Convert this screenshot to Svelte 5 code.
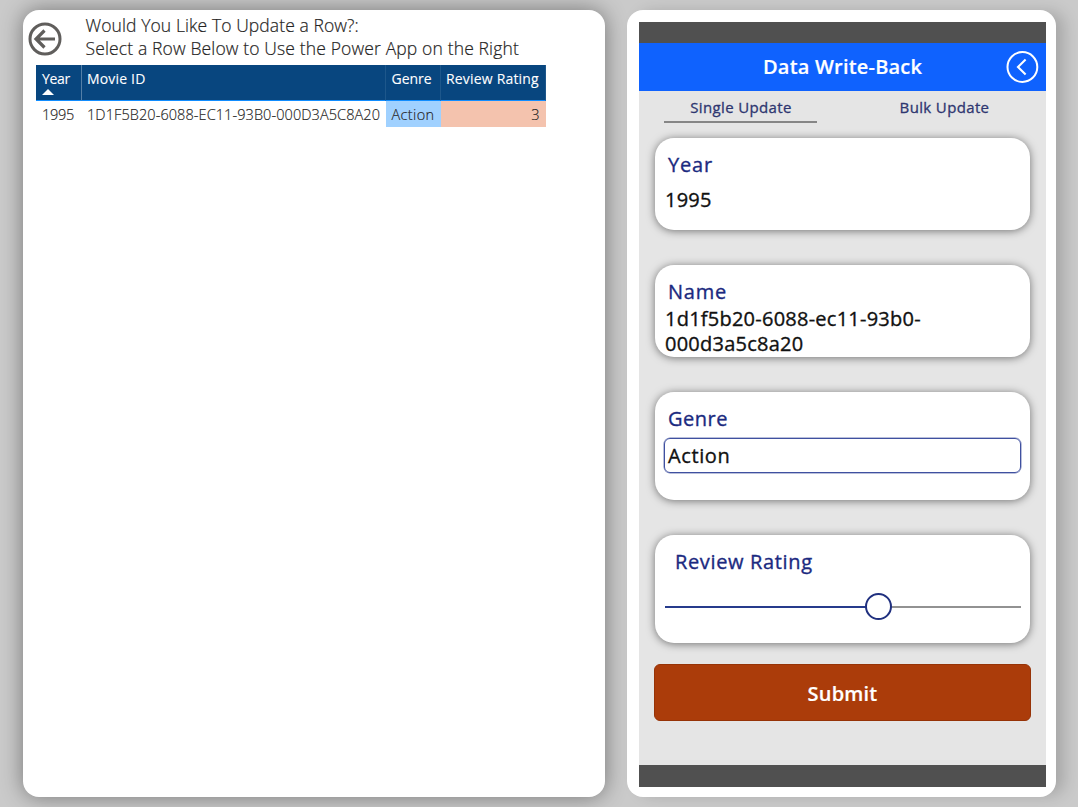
<script>
  const row = { year: '1995', id: '1D1F5B20-6088-EC11-93B0-000D3A5C8A20', genre: 'Action', rating: 3 };
  const sliderPercent = 60;
</script>

<main>
  <section class="panel report">
    <header>
      <svg class="back" width="34" height="34" viewBox="0 0 34 34" fill="none" stroke="#605e5c">
        <circle cx="17" cy="17" r="15" stroke-width="3" />
        <path d="M27 17H8M16.5 8.5L8 17L16.5 25.5" stroke-width="3.2" />
      </svg>
      <div class="title">
        <div class="t1">Would You Like To Update a Row?:</div>
        <div class="t2">Select a Row Below to Use the Power App on the Right</div>
      </div>
    </header>
    <div class="table">
      <div class="cell head year"><span>Year</span><i class="sort"></i></div>
      <div class="cell head movie"><span>Movie ID</span></div>
      <div class="cell head genre"><span>Genre</span></div>
      <div class="cell head rating"><span>Review Rating</span></div>
      <div class="cell year val"><span>{row.year}</span></div>
      <div class="cell movie val"><span>{row.id}</span></div>
      <div class="cell genre val"><span>{row.genre}</span></div>
      <div class="cell rating val"><span>{row.rating}</span></div>
    </div>
  </section>

  <section class="panel device">
    <div class="app">
      <div class="bar"></div>
      <div class="banner">
        <h1>Data Write-Back</h1>
        <svg class="prev" width="34" height="34" viewBox="0 0 34 34" fill="none" stroke="#fff">
          <circle cx="17.4" cy="17" r="14.9" stroke-width="2" />
          <path d="M20.6 9.6L13 17L20.6 24.4" stroke-width="2.1" />
        </svg>
      </div>
      <nav>
        <div class="tab active"><span>Single Update</span></div>
        <div class="tab bulk"><span>Bulk Update</span></div>
      </nav>
      <div class="cards">
        <div class="card">
          <div class="label l-year">Year</div>
          <div class="value year-value">1995</div>
        </div>
        <div class="card">
          <div class="label l-name">Name</div>
          <div class="value name-value">1d1f5b20-6088-ec11-93b0-<br />000d3a5c8a20</div>
        </div>
        <div class="card tall">
          <div class="label l-genre">Genre</div>
          <div class="input value">Action</div>
        </div>
        <div class="card tall">
          <div class="label l-rating">Review Rating</div>
          <div class="slider">
            <div class="fill" style="width: {sliderPercent}%"></div>
            <div class="knob" style="left: {sliderPercent}%"></div>
          </div>
        </div>
      </div>
      <button>Submit</button>
      <div class="bar foot"></div>
    </div>
  </section>
</main>

<style>
  :global(body) { margin: 0; overflow: hidden; }
  main {
    box-sizing: border-box;
    width: 1078px;
    height: 807px;
    padding: 10px 22px 10px 23px;
    display: flex;
    gap: 22px;
    background: #cacaca;
    overflow: hidden;
    font-family: "Open Sans", sans-serif;
  }
  .panel {
    box-sizing: border-box;
    height: 787px;
    border-radius: 16px;
    background: #fff;
  }
  .report { width: 582px; box-shadow: 0 0 22px rgba(0, 0, 0, 0.42); }
  .device { width: 429px; padding: 12px 9px 10px 12px; box-shadow: 10px 0 16px -2px rgba(0, 0, 0, 0.18); }
  header { display: flex; height: 55px; padding-left: 5px; }
  .back { margin-top: 12px; }
  .title {
    margin: 4px 0 0 23.5px;
    font-size: 17.5px;
    line-height: 23px;
    font-weight: 300;
    color: #252423;
    white-space: nowrap;
    -webkit-text-stroke: 0.2px #252423;
  }
  .t1 { letter-spacing: 0.09px; }
  .t2 { letter-spacing: 0.14px; }
  .table {
    display: grid;
    grid-template-columns: 46px 304px 55px 104.5px;
    grid-template-rows: 36px 26px;
    width: 509.5px;
    margin-left: 13px;
    font-size: 14px;
    white-space: nowrap;
  }
  .cell { box-sizing: border-box; padding: 0 5px; line-height: 28px; }
  .head {
    padding-top: 4px;
    line-height: 20px;
    color: #fff;
    background: #08467f;
    border-bottom: 1px solid #118dff;
    border-right: 1px solid #1d578b;
    letter-spacing: 0.18px;
    -webkit-text-stroke: 0.1px #fff;
  }
  .head.year { padding-left: 6px; border-right-color: #547fa7; letter-spacing: -0.3px; }
  .val {
    font-size: 14.5px;
    color: #252423;
    font-weight: 300;
    letter-spacing: 0.08px;
    -webkit-text-stroke: 0.15px #252423;
  }
  .val.year { padding-left: 6px; letter-spacing: -0.25px; }
  .sort {
    display: block;
    width: 0;
    margin: 0;
    border: 6px solid transparent;
    border-top: 0;
    border-bottom-color: #fff;
  }
  .val.genre { background: #a0d1ff; letter-spacing: 0.35px; padding-left: 5.5px; }
  .head.genre { letter-spacing: -0.05px; padding-left: 5.5px; }
  .val.rating { background: #f4c3ae; text-align: right; padding-right: 6px; }
  .app { display: flex; flex-direction: column; width: 407px; height: 765px; background: #e5e5e5; }
  .bar { height: 21px; background: #505050; flex: none; }
  .foot { height: 22px; margin-top: auto; }
  .banner {
    display: flex;
    align-items: center;
    height: 48px;
    padding-right: 7px;
    background: #0f62fe;
    color: #fff;
  }
  h1 {
    margin: 0 0 0 124px;
    font-size: 20px;
    line-height: 28px;
    font-weight: 600;
    letter-spacing: 0.2px;
    white-space: nowrap;
    -webkit-text-stroke: 0.2px #fff;
  }
  .prev { margin-left: auto; }
  nav { display: flex; justify-content: space-between; height: 47px; padding: 0 25px; }
  .tab {
    box-sizing: border-box;
    width: 153px;
    height: 32px;
    padding-top: 6px;
    text-align: center;
    font-size: 15px;
    line-height: 21px;
    letter-spacing: 0.36px;
    color: #2e3670;
    -webkit-text-stroke: 0.3px #2e3670;
  }
  .active { padding-left: 1px; border-bottom: 2px solid #868686; }
  .cards { display: flex; flex-direction: column; gap: 35px; padding: 0 16px; }
  .card {
    box-sizing: border-box;
    height: 92px;
    padding: 13px 9px 0;
    border-radius: 19px;
    background: #fff;
    box-shadow: 0 1px 9px rgba(0, 0, 0, 0.5);
  }
  .tall { height: 108px; }
  .label {
    margin-left: 4px;
    font-size: 20px;
    line-height: 28px;
    letter-spacing: 0.65px;
    color: #1b2a80;
    -webkit-text-stroke: 0.35px #1b2a80;
  }
  .l-genre { letter-spacing: 0.5px; }
  .l-year, .l-name { letter-spacing: 0.8px; }
  .l-rating { margin-left: 11px; }
  .value {
    font-size: 20px;
    line-height: 25px;
    letter-spacing: 0.24px;
    color: #111;
    white-space: nowrap;
    -webkit-text-stroke: 0.35px #111;
  }
  .year-value { margin: 8px 0 0 1px; }
  .name-value { margin: 0 0 0 1px; }
  .input {
    box-sizing: border-box;
    height: 35px;
    margin-top: 5px;
    padding-left: 3px;
    border: 1.5px solid #3f50a0;
    border-radius: 6px;
    line-height: 34px;
    letter-spacing: 0.6px;
    box-shadow: 0 0 0 0.5px #7480b8;
  }
  .slider { position: relative; height: 2px; margin: 30px 0 0 1px; background: #929292; }
  .fill { height: 2px; background: #263b8c; }
  .knob {
    position: absolute;
    top: -13px;
    box-sizing: border-box;
    width: 27px;
    height: 27px;
    margin-left: -13.5px;
    border: 2px solid #20307f;
    border-radius: 50%;
    background: #fff;
  }
  button {
    height: 57px;
    margin: 21px 15px 0 15px;
    padding: 2px 0 0;
    border: 1px solid #963307;
    border-radius: 6px;
    background: #ab3c0a;
    color: #fff;
    font: 600 20px/28px "Open Sans", sans-serif;
    letter-spacing: 0.2px;
    -webkit-text-stroke: 0.2px #fff;
  }
</style>
